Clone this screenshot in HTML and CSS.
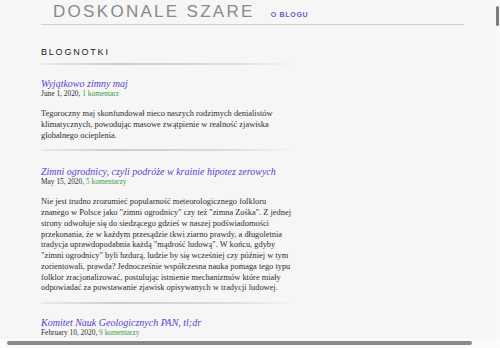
FILE: index.html
```html
<!DOCTYPE html>
<html lang="pl">
<head>
    <meta charset="UTF-8">
    <meta name="viewport" content="width=device-width, initial-scale=1.0">
    <title>Doskonale Szare</title>
    <link rel="stylesheet" href="styles.css">
</head>
<body>
    <header class="masthead">
        <h1 class="site-title">DOSKONALE SZARE</h1>
        <a class="nav-link" href="#">O BLOGU</a>
    </header>

    <main class="content">
        <h2 class="section-title">BLOGNOTKI</h2>
        <hr class="sep">

        <article class="post">
            <h3 class="post-title"><a href="#">Wyjątkowo zimny maj</a></h3>
            <p class="post-meta">June 1, 2020, <a href="#">1 komentarz</a></p>
            <div class="post-body">
                <p>Tegoroczny maj skonfundował nieco naszych rodzimych denialistów klimatycznych, powodując masowe zwątpienie w realność zjawiska globalnego ocieplenia.</p>
            </div>
        </article>
        <hr class="sep">

        <article class="post post-second">
            <h3 class="post-title"><a href="#">Zimni ogrodnicy, czyli podróże w krainie hipotez zerowych</a></h3>
            <p class="post-meta">May 15, 2020, <a href="#">5 komentarzy</a></p>
            <div class="post-body">
                <p>Nie jest trudno zrozumieć popularność meteorologicznego folkloru znanego w Polsce jako "zimni ogrodnicy" czy też "zimna Zośka". Z jednej strony odwołuje się do siedzącego gdzieś w naszej podświadomości przekonania, że w każdym przesądzie tkwi ziarno prawdy, a długoletnia tradycja uprawdopodabnia każdą "mądrość ludową". W końcu, gdyby "zimni ogrodnicy" byli bzdurą, ludzie by się wcześniej czy później w tym zorientowali, prawda? Jednocześnie współczesna nauka pomaga tego typu folklor zracjonalizować, postulując istnienie mechanizmów które miały odpowiadać za powstawanie zjawisk opisywanych w tradycji ludowej.</p>
            </div>
        </article>
        <hr class="sep">

        <article class="post">
            <h3 class="post-title"><a href="#">Komitet Nauk Geologicznych PAN, tl;dr</a></h3>
            <p class="post-meta">February 10, 2020, <a href="#">9 komentarzy</a></p>
            <div class="post-body post-body-fold">
                <p>Komitet Nauk Geologicznych PAN opublikował stanowisko w sprawie zmian klimatu, które wywołało sporo zamieszania. Postanowiłem przeczytać je uważnie i streścić najważniejsze tezy.</p>
            </div>
        </article>
    </main>

    <!-- paski przewijania jak w oknie przegladarki -->
    <div class="vscroll"><span class="vthumb"></span></div>
    <div class="hscroll"><span class="hthumb"></span></div>
</body>
</html>
```

FILE: styles.css
```css
body{
    margin: 0;
    background-color: #f6f6f6;
    color: #2e2e2e;
    font-family: "Liberation Serif", "Times New Roman", serif;
}

a{
    text-decoration: none;
}

/* naglowek */
.masthead{
    display: flex;
    align-items: baseline;
    gap: 16px;
    box-sizing: border-box;
    width: 423px;
    margin-left: 41px;
    padding: 2px 0 2px 12px;
    border-bottom: 1px solid #cfcfcf;
}
.site-title{
    margin: 0;
    font: 400 17px/20px "Liberation Sans", Arial, sans-serif;
    letter-spacing: 2.3px;
    color: #8a8a8a;
}
.nav-link{
    font: 600 7px "Liberation Sans", Arial, sans-serif;
    letter-spacing: 0.7px;
    color: #6a5bcf;
}

/* lista wpisow */
.content{
    width: 255px;
    margin-left: 41px;
}
.section-title{
    margin: 21px 0 0;
    font: 400 9px/12px "Liberation Sans", Arial, sans-serif;
    letter-spacing: 1.8px;
    color: #1a1a1a;
}
.sep{
    height: 2px;
    margin: 5px 0 0;
    border: none;
    background: linear-gradient(to right, rgba(0,0,0,0.05), rgba(0,0,0,0.17) 30%, rgba(0,0,0,0.1) 75%, rgba(0,0,0,0));
}
.post{
    padding-top: 13px;
}
.post-second{
    padding-top: 15px;
}
.post + .sep{
    margin-top: 8px;
}
.post-title{
    margin: 0;
    font: italic 400 10px/11px "Liberation Serif", serif;
}
.post-title a{
    color: #5a41d2;
}
.post-meta{
    margin: 0;
    font-size: 7.4px;
    line-height: 9px;
    color: #2e2e2e;
}
.post-meta a{
    color: #3f9a45;
}
.post-body p{
    margin: 11px 0 0;
    font-size: 8.4px;
    line-height: 10.75px;
}
.post-body-fold{
    padding-top: 16px;
}

/* paski przewijania */
.vscroll{
    position: fixed;
    top: 0;
    right: 0;
    bottom: 9px;
    width: 5px;
    background-color: #f9f9f9;
}
.vthumb{
    position: absolute;
    top: 6px;
    left: 1px;
    width: 3px;
    height: 20px;
    border-radius: 2px;
    background-color: #7c7c7c;
}
.hscroll{
    position: fixed;
    left: 0;
    right: 0;
    bottom: 0;
    height: 9px;
    background-color: #fbfbfb;
}
.hthumb{
    position: absolute;
    top: 2px;
    left: 7px;
    width: 465px;
    height: 4px;
    border-radius: 2px;
    background-color: #8a8a8a;
}
```
